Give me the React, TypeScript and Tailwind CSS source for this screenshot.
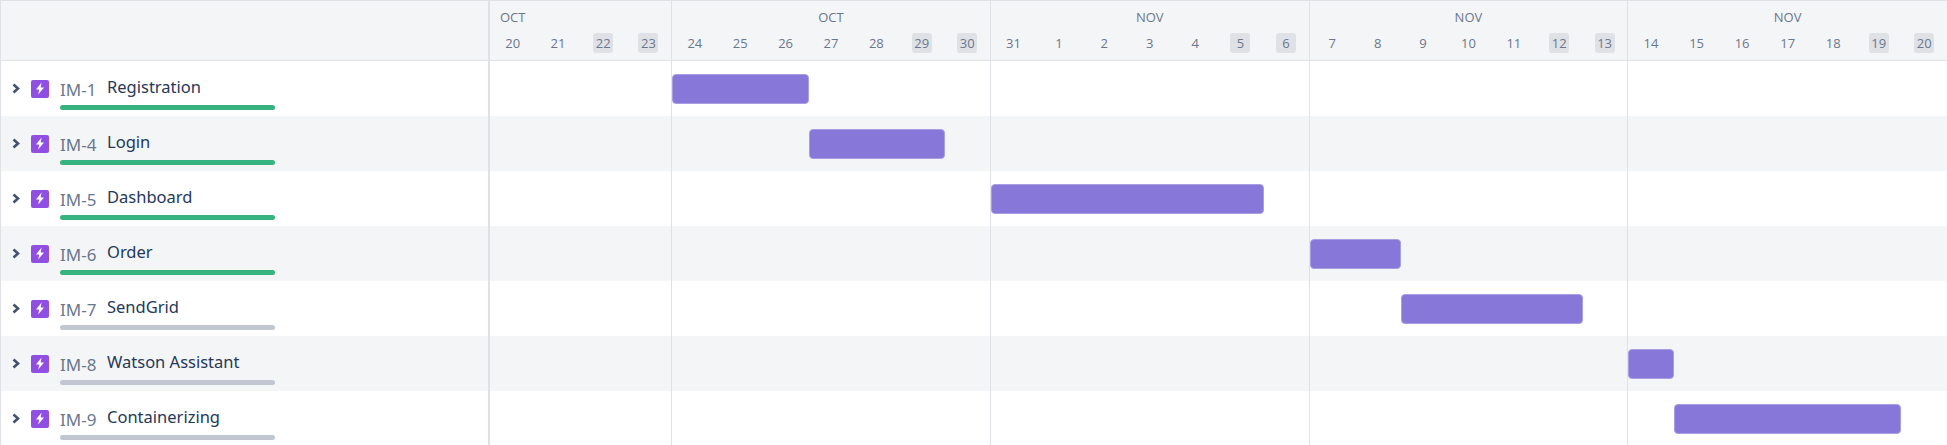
const weeks = [
  { month: "OCT", days: [20, 21, 22, 23], cell: "col-start-1 col-end-[5]", first: true },
  { month: "OCT", days: [24, 25, 26, 27, 28, 29, 30], cell: "col-start-[5] col-end-[12]" },
  { month: "NOV", days: [31, 1, 2, 3, 4, 5, 6], cell: "col-start-[12] col-end-[19]" },
  { month: "NOV", days: [7, 8, 9, 10, 11, 12, 13], cell: "col-start-[19] col-end-[26]" },
  { month: "NOV", days: [14, 15, 16, 17, 18, 19, 20], cell: "col-start-[26] col-end-[33]" },
];

const issues = [
  { id: "IM-1", title: "Registration", done: true, bar: "col-start-[5] col-end-[8]" },
  { id: "IM-4", title: "Login", done: true, bar: "col-start-[8] col-end-[11]" },
  { id: "IM-5", title: "Dashboard", done: true, bar: "col-start-[12] col-end-[18]" },
  { id: "IM-6", title: "Order", done: true, bar: "col-start-[19] col-end-[21]" },
  { id: "IM-7", title: "SendGrid", done: false, bar: "col-start-[21] col-end-[25]" },
  { id: "IM-8", title: "Watson Assistant", done: false, bar: "col-start-[26] col-end-[27]" },
  { id: "IM-9", title: "Containerizing", done: false, bar: "col-start-[27] col-end-[32]" },
];

function Chevron() {
  return (
    <svg width="8" height="11" viewBox="0 0 8 11" className="shrink-0 -mt-[2px]">
      <path
        d="M1.5 1.5 L6 5.5 L1.5 9.5"
        fill="none"
        stroke="#42526e"
        strokeWidth="2.6"
      />
    </svg>
  );
}

function EpicIcon() {
  return (
    <div className="w-[18px] h-[18px] rounded-[2px] bg-[#904ee2] flex items-center justify-center shrink-0 -mt-[2px]">
      <svg width="10" height="13" viewBox="0 0 10 13">
        <path d="M6.6 0.5 L1 7.4 H4.2 L3.2 12.5 L9 5.4 H5.6 Z" fill="#fff" />
      </svg>
    </div>
  );
}

function App() {
  return (
    <div className="h-[445px] w-full overflow-hidden bg-white border-t border-l border-[#dfe1e6] font-['Open_Sans',sans-serif]">
      {/* header */}
      <div className="flex h-[60px] bg-[#f4f5f7] border-b border-[#dfe1e6]">
        <div className="w-[489px] shrink-0 border-r-2 border-[#dfe1e6]" />
        <div className="flex-1 grid grid-cols-[repeat(32,minmax(0,1fr))]">
          {weeks.map((week, i) => (
            <div
              key={i}
              className={`${week.cell} ${i < 4 ? "border-r border-[#dfe1e6]" : ""} flex flex-col`}
            >
              <div
                className={`h-[32px] pt-[7px] text-[13px] leading-[18px] text-[#6b778c] ${
                  week.first ? "pl-[10px]" : "text-center"
                }`}
              >
                {week.month}
              </div>
              <div className="flex">
                {week.days.map((day, d) => (
                  <div key={day} className="flex-1 flex justify-center">
                    <span
                      className={`w-[20px] h-[20px] rounded-[3px] text-[13px] leading-[20px] text-center text-[#6b778c] ${
                        d >= week.days.length - 2 ? "bg-[#dfe1e6]" : ""
                      }`}
                    >
                      {day}
                    </span>
                  </div>
                ))}
              </div>
            </div>
          ))}
        </div>
      </div>

      {/* rows */}
      {issues.map((issue, idx) => (
        <div
          key={issue.id}
          className={`flex h-[55px] ${idx % 2 === 1 ? "bg-[#f4f5f7]" : "bg-white"}`}
        >
          <div className="w-[489px] shrink-0 border-r-2 border-[#dfe1e6] pl-[11px] pt-[13px]">
            <div className="flex items-center h-[31px]">
              <Chevron />
              <div className="ml-[11px]">
                <EpicIcon />
              </div>
              <span className="ml-[11px] w-[47px] text-[17px] leading-[20px] text-[#6b778c] font-['Noto_Sans',sans-serif] shrink-0">
                {issue.id}
              </span>
              <span className="text-[16.5px] leading-[20px] text-[#253858] font-['Noto_Sans',sans-serif] -mt-[5px]">
                {issue.title}
              </span>
            </div>
            <div
              className={`ml-[48px] w-[215px] h-[5px] rounded-[3px] ${
                issue.done ? "bg-[#36b37e]" : "bg-[#c1c7d0]"
              }`}
            />
          </div>
          <div className="flex-1 grid grid-cols-[repeat(32,minmax(0,1fr))] grid-rows-1">
            {weeks.map((week, i) => (
              <div
                key={i}
                className={`${week.cell} row-start-1 ${i < 4 ? "border-r border-[#dfe1e6]" : ""}`}
              />
            ))}
            <div
              className={`${issue.bar} row-start-1 self-center h-[30px] rounded-[4px] bg-[#8777d9] border border-[#a99de3]`}
            />
          </div>
        </div>
      ))}
    </div>
  );
}

export default App;
